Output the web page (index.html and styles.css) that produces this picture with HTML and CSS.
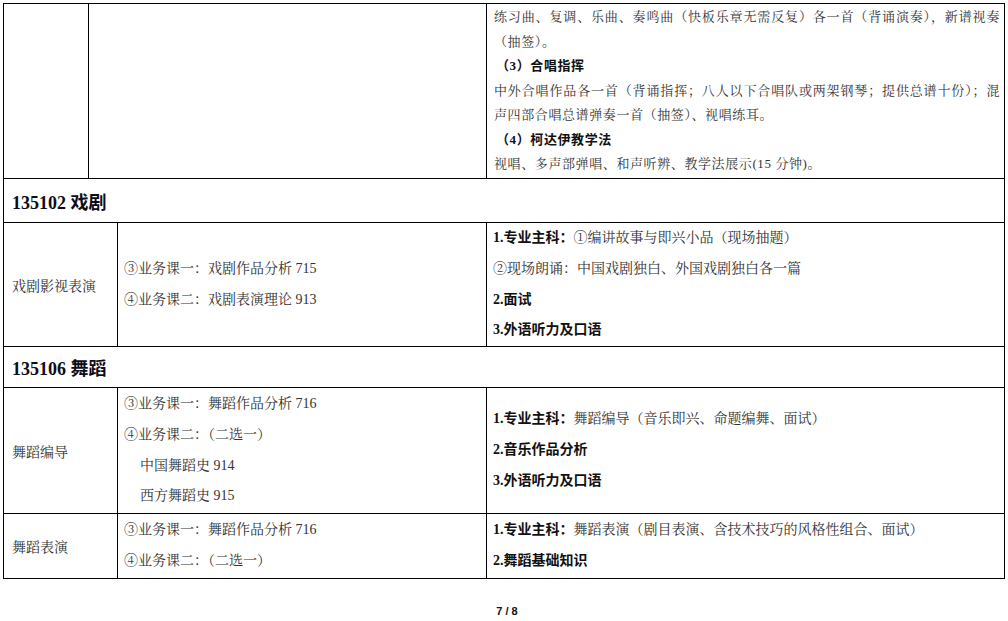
FILE: index.html
```html
<!DOCTYPE html>
<html lang="zh">
<head>
<meta charset="utf-8">
<link rel="stylesheet" href="styles.css">
</head>
<body>
<div class="page">
  <table class="tbl top">
    <colgroup><col class="c1"><col class="c2"><col></colgroup>
    <tr class="r-top">
      <td></td>
      <td></td>
      <td class="req">
        <div class="ln just">练习曲、复调、乐曲、奏鸣曲（快板乐章无需反复）各一首（背诵演奏），新谱视奏</div>
        <div class="ln">（抽签）。</div>
        <div class="ln sub">（3）合唱指挥</div>
        <div class="ln just">中外合唱作品各一首（背诵指挥；八人以下合唱队或两架钢琴；提供总谱十份）；混</div>
        <div class="ln">声四部合唱总谱弹奏一首（抽签）、视唱练耳。</div>
        <div class="ln sub">（4）柯达伊教学法</div>
        <div class="ln">视唱、多声部弹唱、和声听辨、教学法展示(15 分钟)。</div>
      </td>
    </tr>
  </table>
  <table class="tbl main">
    <colgroup><col class="m1"><col class="m2"><col></colgroup>
    <tr class="r-h1">
      <td colspan="3" class="head">135102 戏剧</td>
    </tr>
    <tr class="r-a">
      <td class="name">戏剧影视表演</td>
      <td class="course">
        <div class="ln">③业务课一：戏剧作品分析 715</div>
        <div class="ln">④业务课二：戏剧表演理论 913</div>
      </td>
      <td class="exam">
        <div class="ln"><b>1.专业主科：</b>①编讲故事与即兴小品（现场抽题）</div>
        <div class="ln">②现场朗诵：中国戏剧独白、外国戏剧独白各一篇</div>
        <div class="ln"><b>2.面试</b></div>
        <div class="ln"><b>3.外语听力及口语</b></div>
      </td>
    </tr>
    <tr class="r-h2">
      <td colspan="3" class="head">135106 舞蹈</td>
    </tr>
    <tr class="r-b">
      <td class="name">舞蹈编导</td>
      <td class="course">
        <div class="ln">③业务课一：舞蹈作品分析 716</div>
        <div class="ln">④业务课二：（二选一）</div>
        <div class="ln ind">中国舞蹈史 914</div>
        <div class="ln ind">西方舞蹈史 915</div>
      </td>
      <td class="exam">
        <div class="ln"><b>1.专业主科：</b>舞蹈编导（音乐即兴、命题编舞、面试）</div>
        <div class="ln"><b>2.音乐作品分析</b></div>
        <div class="ln"><b>3.外语听力及口语</b></div>
      </td>
    </tr>
    <tr class="r-c">
      <td class="name">舞蹈表演</td>
      <td class="course">
        <div class="ln">③业务课一：舞蹈作品分析 716</div>
        <div class="ln">④业务课二：（二选一）</div>
      </td>
      <td class="exam">
        <div class="ln"><b>1.专业主科：</b>舞蹈表演（剧目表演、含技术技巧的风格性组合、面试）</div>
        <div class="ln"><b>2.舞蹈基础知识</b></div>
      </td>
    </tr>
  </table>
</div>
<div class="footer">7 / 8</div>
</body>
</html>
```

FILE: styles.css
```css
html, body {
  margin: 0;
  padding: 0;
  background: #fff;
}
body {
  width: 1008px;
  height: 621px;
  overflow: hidden;
  font-family: "Liberation Serif", "Noto Serif CJK SC", "Noto Sans CJK SC", serif;
  color: #333;
}
.page {
  padding: 3px 0 0 3px;
  width: 1002px;
}
.tbl {
  border-collapse: collapse;
  table-layout: fixed;
  width: 1002px;
}
.tbl td {
  border: 1px solid #000;
  padding: 0;
  vertical-align: middle;
}
.top .c1 { width: 85px; }
.top .c2 { width: 398px; }
.main { border-top: none; }
.main tr:first-child td { border-top: none; }
.main .m1 { width: 114px; }
.main .m2 { width: 369px; }

.r-top td { height: 174px; }
.req {
  padding: 0 4px 0 7px !important;
  font-size: 13px;
  letter-spacing: 0.6px;
  line-height: 24.6px;
}
.req .ln { white-space: nowrap; }
.req .just {
  text-align: justify;
  text-align-last: justify;
}
.req .sub {
  font-weight: bold;
  color: #111;
  font-family: "Liberation Serif", "Noto Sans CJK SC", sans-serif;
  padding-left: 2px;
}

.head {
  font-weight: bold;
  font-size: 18px;
  color: #0d0d1a;
  padding: 0 0 0 8px !important;
  font-family: "Liberation Serif", "Noto Sans CJK SC", serif;
}
.r-h1 td { height: 43px; }
.r-h2 td { height: 40px; }
.r-a td { height: 123px; }
.r-b td { height: 125px; }
.r-c td { height: 64px; }

.name {
  font-size: 14px;
  padding-left: 8px !important;
}
.course {
  font-size: 14px;
  line-height: 30.7px;
  padding-left: 6px !important;
}
.course .ind { padding-left: 16px; }
.exam {
  font-size: 14px;
  line-height: 30.7px;
  padding-left: 6px !important;
}
.exam b {
  color: #111;
  font-family: "Liberation Serif", "Noto Sans CJK SC", sans-serif;
}
.footer {
  position: absolute;
  left: 0;
  top: 605px;
  width: 1014px;
  text-align: center;
  font-family: "Liberation Sans", "DejaVu Sans", sans-serif;
  font-weight: bold;
  font-size: 11px;
  color: #111;
}
```
